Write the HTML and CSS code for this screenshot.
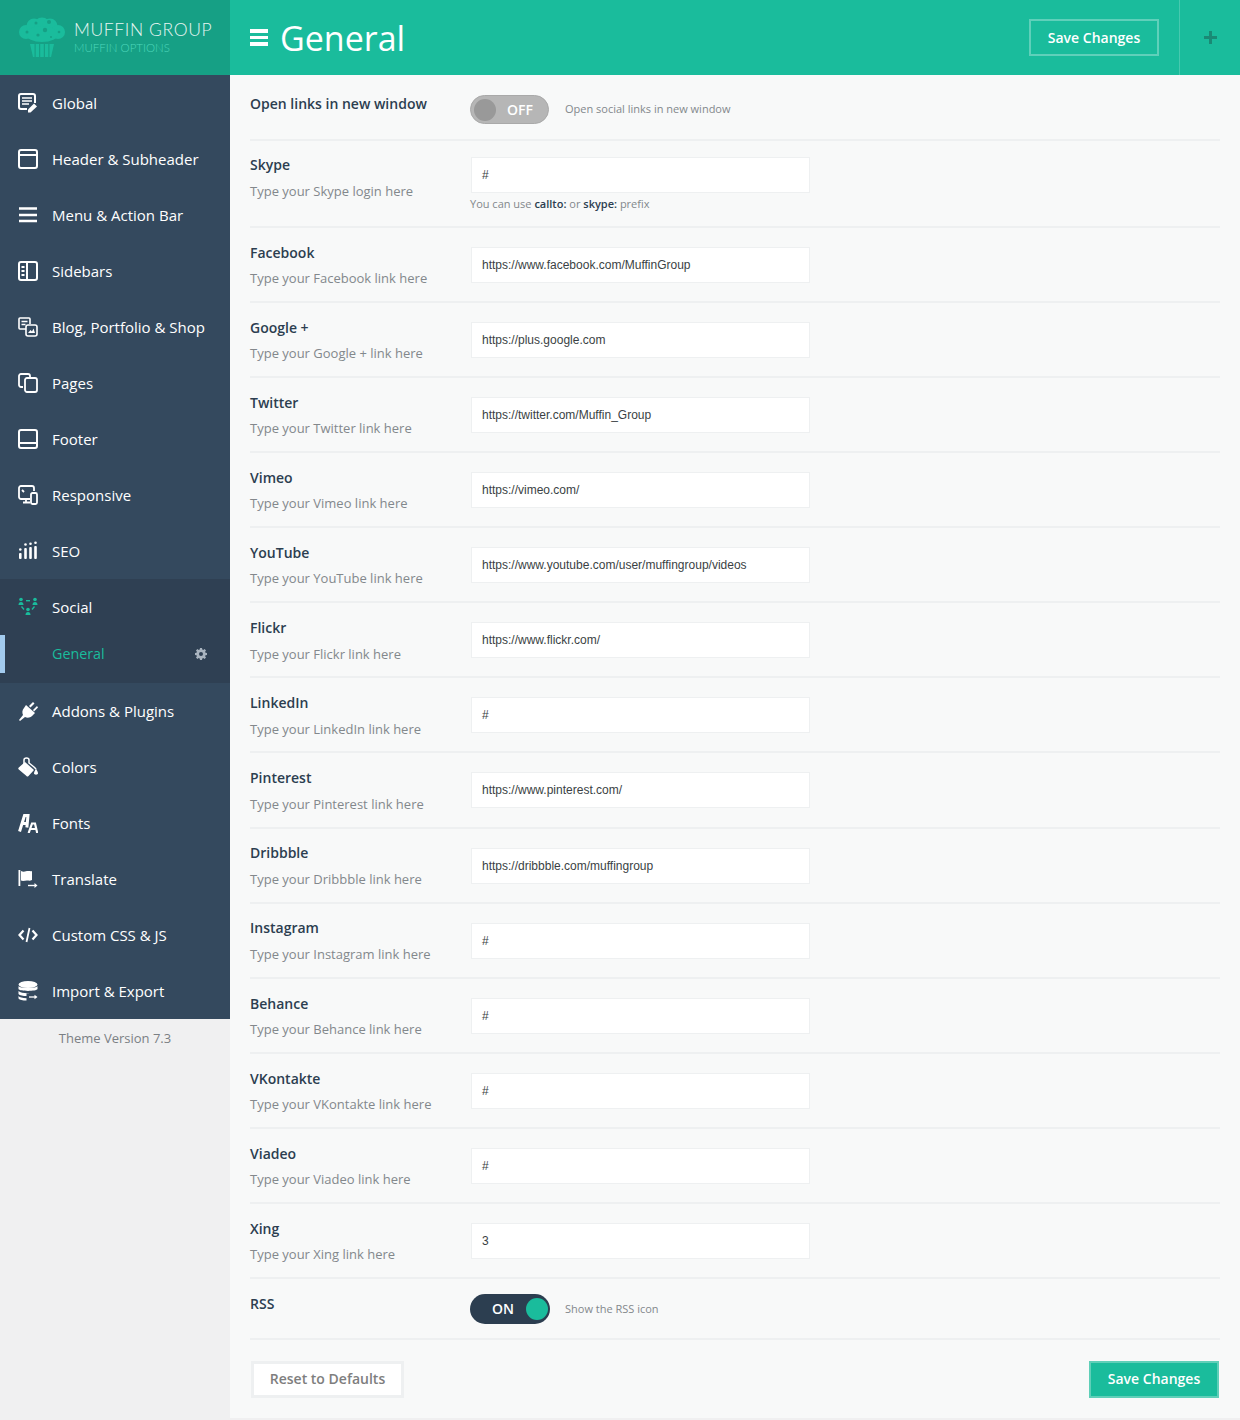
FILE: index.html
```html
<!DOCTYPE html>
<html lang="en">
<head>
  <meta charset="UTF-8">
  <title>Muffin Options</title>
  <link rel="stylesheet" href="styles.css">
</head>
<body>
  <div class="mfn-wrap">
    <div class="mfn-side">
      <div class="mfn-logo">
        <svg class="mfn-muffin" width="48" height="42" viewBox="0 0 48 42">
          <g fill="#1abc9c">
            <circle cx="8" cy="15" r="7"/><circle cx="16" cy="9" r="7.500"/><circle cx="24" cy="8.500" r="8"/><circle cx="32" cy="9" r="7.500"/><circle cx="40" cy="15" r="7"/>
            <ellipse cx="24" cy="17" rx="16" ry="8"/>
            <path d="M12 27h24l-3 13H15z"/>
          </g>
          <g fill="#16a085">
            <circle cx="9" cy="15" r="1.500"/><circle cx="18" cy="6" r="1.500"/><circle cx="31" cy="5" r="2"/>
            <circle cx="27" cy="13" r="2.200"/><circle cx="20" cy="18" r="1.600"/><circle cx="33" cy="20" r="1"/><circle cx="41" cy="15" r="1.300"/>
            <rect x="16.500" y="27" width="1.200" height="13"/><rect x="21" y="27" width="1.200" height="13"/><rect x="25.800" y="27" width="1.200" height="13"/><rect x="30.300" y="27" width="1.200" height="13"/>
          </g>
        </svg>
        <div class="mfn-logo-text">
          <div class="mfn-logo-name">MUFFIN GROUP</div>
          <div class="mfn-logo-sub">MUFFIN OPTIONS</div>
        </div>
      </div>
      <ul class="mfn-menu">
        <li class="mfn-item">
          <svg class="mfn-ico" viewBox="0 0 20 20" fill="none" stroke="#fff" stroke-width="2"><path d="M9 16H3a2 2 0 0 1-2-2V3a2 2 0 0 1 2-2h12a2 2 0 0 1 2 2v7"/><path stroke-width="1.600" d="M4 5h10M4 8h10M4 11h7"/><path fill="#fff" stroke="none" d="M16 10.500l3 3-6.500 6H10v-3z"/></svg>
          Global
        </li>
        <li class="mfn-item">
          <svg class="mfn-ico" viewBox="0 0 20 20" fill="none" stroke="#fff" stroke-width="2"><rect x="1" y="1" width="18" height="18" rx="2"/><path d="M1 6h18"/></svg>
          Header &amp; Subheader
        </li>
        <li class="mfn-item">
          <svg class="mfn-ico" viewBox="0 0 20 20" fill="none" stroke="#fff" stroke-width="2.400"><path d="M1 3.500h18M1 10h18M1 16h18"/></svg>
          Menu &amp; Action Bar
        </li>
        <li class="mfn-item">
          <svg class="mfn-ico" viewBox="0 0 20 20" fill="none" stroke="#fff" stroke-width="2"><rect x="1" y="1" width="18" height="18" rx="2"/><path d="M9 1v18M3.500 6h3M3.500 10h3M3.500 14h3"/></svg>
          Sidebars
        </li>
        <li class="mfn-item">
          <svg class="mfn-ico" viewBox="0 0 20 20" fill="none" stroke="#fff" stroke-width="1.600"><path d="M8 12H2a1 1 0 0 1-1-1V2a1 1 0 0 1 1-1h9a1 1 0 0 1 1 1v5"/><path d="M3.500 4.500h6M3.500 7.500h4"/><rect x="8" y="8" width="11" height="11" rx="2"/><path fill="#fff" stroke="none" d="M10 16l2.500-3 1.500 1.500 1.500-3 1.500 4.500z"/></svg>
          Blog, Portfolio &amp; Shop
        </li>
        <li class="mfn-item">
          <svg class="mfn-ico" viewBox="0 0 20 20" fill="none" stroke="#fff" stroke-width="1.800"><path d="M5 14H3a2 2 0 0 1-2-2V3a2 2 0 0 1 2-2h7a2 2 0 0 1 2 2v2"/><rect x="7" y="5" width="12" height="14" rx="2"/></svg>
          Pages
        </li>
        <li class="mfn-item">
          <svg class="mfn-ico" viewBox="0 0 20 20" fill="none" stroke="#fff" stroke-width="2"><rect x="1" y="1" width="18" height="18" rx="2"/><path d="M1 14h18"/></svg>
          Footer
        </li>
        <li class="mfn-item">
          <svg class="mfn-ico" viewBox="0 0 20 20" fill="none" stroke="#fff" stroke-width="1.800"><path d="M12 14H3a2 2 0 0 1-2-2V3a2 2 0 0 1 2-2h11a2 2 0 0 1 2 2v3"/><path d="M5 17.500h7M8 14v3"/><rect x="13" y="8" width="6" height="11" rx="1.500" fill="#34495e"/><path d="M4 5l2 2"/></svg>
          Responsive
        </li>
        <li class="mfn-item">
          <svg class="mfn-ico" viewBox="0 0 20 20" fill="#fff"><rect x="1" y="12" width="2.600" height="6" rx="1"/><circle cx="2.300" cy="8.500" r="1.300"/><rect x="6.200" y="7" width="2.600" height="11" rx="1"/><circle cx="7.500" cy="3.500" r="1.300"/><rect x="11.200" y="6" width="2.600" height="12" rx="1"/><circle cx="12.500" cy="2.800" r="1.300"/><rect x="16.200" y="5" width="2.600" height="13" rx="1"/><circle cx="17.500" cy="1.800" r="1.300"/></svg>
          SEO
        </li>
        <li class="mfn-group">
          <div class="mfn-item mfn-item-open">
            <svg class="mfn-ico" viewBox="0 0 20 20" fill="#1abc9c"><circle cx="3" cy="2.500" r="1.800"/><path d="M0.500 8c0-2 1-3 2.500-3s2.500 1 2.500 3z"/><circle cx="17" cy="2.500" r="1.800"/><path d="M14.500 8c0-2 1-3 2.500-3s2.500 1 2.500 3z"/><circle cx="10" cy="12.500" r="1.800"/><path d="M7.500 18c0-2 1-3 2.500-3s2.500 1 2.500 3z"/><rect x="8" y="3" width="4" height="1.400"/><path d="M3 10l1-1 2.500 3-1 1zM17 10l-1-1-2.500 3 1 1z"/></svg>
            Social
          </div>
          <div class="mfn-subitem">
            General
            <svg class="mfn-gear" viewBox="0 0 12 12" fill="#a9b4bf"><path fill-rule="evenodd" d="M5 0h2l.3 1.500 1 .4L9.600 1 11 2.400l-.9 1.300.4 1L12 5v2l-1.500.3-.4 1 .9 1.300L9.600 11l-1.300-.9-1 .4L7 12H5l-.3-1.500-1-.4-1.300.9L1 9.600l.9-1.300-.4-1L0 7V5l1.500-.3.4-1L1 2.400 2.400 1l1.300.9 1-.4zM6 4a2 2 0 1 0 0 4 2 2 0 0 0 0-4z"/></svg>
          </div>
        </li>
        <li class="mfn-item">
          <svg class="mfn-ico" viewBox="0 0 20 20" fill="#fff"><path d="M8 4l9 8-3 3c-2 2-5 2-7 1l-5 4-1-1 4-5c-1-2-1-5 1-7zM11 5l4-4 1.500 1.500-4 4zM15 9l4-4 1 1.500-4 4z"/></svg>
          Addons &amp; Plugins
        </li>
        <li class="mfn-item">
          <svg class="mfn-ico" viewBox="0 0 20 20" fill="#fff"><path d="M7 5l9 8-5.500 6c-.7.700-1.500.700-2 0L.8 12.500c-.7-.7-.7-1.500 0-2z"/><path fill="none" stroke="#fff" stroke-width="1.500" d="M6 8V3c0-2.800 5-2.800 5 0v3l5 4 2 2"/><path d="M18 11.500c1 2 2 3.500 2 5s-4 1.500-4 0 1-3 2-5z"/></svg>
          Colors
        </li>
        <li class="mfn-item">
          <svg class="mfn-ico" viewBox="0 0 20 20" fill="none" stroke="#fff" stroke-linecap="square"><path stroke-width="3" d="M2 17L6.500 2.500H10L9 13M4.500 10.500H9"/><path stroke-width="2.200" d="M11 19l3-8.500 3 0 2 8.500M12.500 16h5"/></svg>
          Fonts
        </li>
        <li class="mfn-item">
          <svg class="mfn-ico" viewBox="0 0 20 20" fill="#fff"><rect x="0.500" y="1" width="1.800" height="16"/><path d="M3 2c3 1.500 5 0 7 0s3 .5 4 0v9c-2 1-3 .5-5 .5s-4 1-6 0z"/><path fill="none" stroke="#fff" stroke-width="1.400" d="M10 16.500h8"/><path d="M16.500 14l3 2.500-3 2.500z"/></svg>
          Translate
        </li>
        <li class="mfn-item">
          <svg class="mfn-ico" viewBox="0 0 20 20" fill="none" stroke="#fff" stroke-width="2.200"><path d="M5.500 5.500L1.500 10l4 4.500M14.500 5.500l4 4.500-4 4.500"/><path stroke-width="1.800" d="M11.500 3L8.500 17"/></svg>
          Custom CSS &amp; JS
        </li>
        <li class="mfn-item">
          <svg class="mfn-ico" viewBox="0 0 20 20" fill="#fff"><ellipse cx="10" cy="3.500" rx="9.500" ry="3.500"/><path d="M.5 5c1 2.500 18 2.500 19 0v3c-1 2.500-18 2.500-19 0z"/><path d="M.5 10c2 2 8 2.500 11 2h-3v3c-3 0-7-.5-8-2zM.5 15c1 1.500 4 2 8 2.200v2.300c-4 0-7-.5-8-2z"/><path fill="none" stroke="#fff" stroke-width="1.300" d="M11 16h7"/><path d="M16.500 13.800l3 2.200-3 2.200z"/></svg>
          Import &amp; Export
        </li>
      </ul>
      <div class="mfn-version">Theme Version 7.3</div>
    </div>

    <div class="mfn-main">
      <div class="mfn-top">
        <div class="mfn-burger"><span></span><span></span><span></span></div>
        <h1 class="mfn-title">General</h1>
        <a class="mfn-btn mfn-btn-top">Save Changes</a>
        <div class="mfn-expand"><span class="mfn-plus"></span></div>
      </div>

      <div class="mfn-form">
        <div class="mfn-row mfn-row-toggle">
          <div class="mfn-label"><h3>Open links in new window</h3></div>
          <div class="mfn-field mfn-field-toggle">
            <div class="mfn-switch mfn-switch-off"><i></i><b>OFF</b></div>
            <span class="mfn-desc">Open social links in new window</span>
          </div>
        </div>
        <div class="mfn-row mfn-row-skype">
          <div class="mfn-label"><h3>Skype</h3><p>Type your Skype login here</p></div>
          <div class="mfn-field">
            <div class="mfn-input">#</div>
            <div class="mfn-note">You can use <b>callto:</b> or <b>skype:</b> prefix</div>
          </div>
        </div>
        <div class="mfn-row">
          <div class="mfn-label"><h3>Facebook</h3><p>Type your Facebook link here</p></div>
          <div class="mfn-field"><div class="mfn-input">https://www.facebook.com/MuffinGroup</div></div>
        </div>
        <div class="mfn-row">
          <div class="mfn-label"><h3>Google +</h3><p>Type your Google + link here</p></div>
          <div class="mfn-field"><div class="mfn-input">https://plus.google.com</div></div>
        </div>
        <div class="mfn-row">
          <div class="mfn-label"><h3>Twitter</h3><p>Type your Twitter link here</p></div>
          <div class="mfn-field"><div class="mfn-input">https://twitter.com/Muffin_Group</div></div>
        </div>
        <div class="mfn-row">
          <div class="mfn-label"><h3>Vimeo</h3><p>Type your Vimeo link here</p></div>
          <div class="mfn-field"><div class="mfn-input">https://vimeo.com/</div></div>
        </div>
        <div class="mfn-row">
          <div class="mfn-label"><h3>YouTube</h3><p>Type your YouTube link here</p></div>
          <div class="mfn-field"><div class="mfn-input">https://www.youtube.com/user/muffingroup/videos</div></div>
        </div>
        <div class="mfn-row">
          <div class="mfn-label"><h3>Flickr</h3><p>Type your Flickr link here</p></div>
          <div class="mfn-field"><div class="mfn-input">https://www.flickr.com/</div></div>
        </div>
        <div class="mfn-row">
          <div class="mfn-label"><h3>LinkedIn</h3><p>Type your LinkedIn link here</p></div>
          <div class="mfn-field"><div class="mfn-input">#</div></div>
        </div>
        <div class="mfn-row">
          <div class="mfn-label"><h3>Pinterest</h3><p>Type your Pinterest link here</p></div>
          <div class="mfn-field"><div class="mfn-input">https://www.pinterest.com/</div></div>
        </div>
        <div class="mfn-row">
          <div class="mfn-label"><h3>Dribbble</h3><p>Type your Dribbble link here</p></div>
          <div class="mfn-field"><div class="mfn-input">https://dribbble.com/muffingroup</div></div>
        </div>
        <div class="mfn-row">
          <div class="mfn-label"><h3>Instagram</h3><p>Type your Instagram link here</p></div>
          <div class="mfn-field"><div class="mfn-input">#</div></div>
        </div>
        <div class="mfn-row">
          <div class="mfn-label"><h3>Behance</h3><p>Type your Behance link here</p></div>
          <div class="mfn-field"><div class="mfn-input">#</div></div>
        </div>
        <div class="mfn-row">
          <div class="mfn-label"><h3>VKontakte</h3><p>Type your VKontakte link here</p></div>
          <div class="mfn-field"><div class="mfn-input">#</div></div>
        </div>
        <div class="mfn-row">
          <div class="mfn-label"><h3>Viadeo</h3><p>Type your Viadeo link here</p></div>
          <div class="mfn-field"><div class="mfn-input">#</div></div>
        </div>
        <div class="mfn-row">
          <div class="mfn-label"><h3>Xing</h3><p>Type your Xing link here</p></div>
          <div class="mfn-field"><div class="mfn-input">3</div></div>
        </div>
        <div class="mfn-row mfn-row-toggle mfn-row-rss">
          <div class="mfn-label"><h3>RSS</h3></div>
          <div class="mfn-field mfn-field-toggle">
            <div class="mfn-switch mfn-switch-on"><b>ON</b><i></i></div>
            <span class="mfn-desc">Show the RSS icon</span>
          </div>
        </div>
        <div class="mfn-foot">
          <a class="mfn-btn mfn-btn-reset">Reset to Defaults</a>
          <a class="mfn-btn mfn-btn-save">Save Changes</a>
        </div>
      </div>
    </div>
  </div>
</body>
</html>
```

FILE: styles.css
```css
* {
  box-sizing: border-box;
}
body {
  margin: 0;
  background: #f0f0f1;
  font-family: "Open Sans", sans-serif;
  color: #2c3e50;
}
.mfn-wrap {
  display: flex;
  align-items: flex-start;
  width: 1240px;
}

/* sidebar */
.mfn-side {
  width: 230px;
  flex: none;
}
.mfn-logo {
  height: 75px;
  background: #16a085;
  display: flex;
  align-items: center;
  padding: 0 0 0 18px;
  gap: 8px;
}
.mfn-muffin {
  flex: none;
}
.mfn-logo-text {
  font-family: "Lato", sans-serif;
  font-weight: 300;
  padding-top: 1px;
}
.mfn-logo-name {
  font-size: 17.500px;
  line-height: 18px;
  letter-spacing: 0.6px;
  color: #e8f6f3;
  white-space: nowrap;
}
.mfn-logo-sub {
  font-size: 11.500px;
  line-height: 17px;
  letter-spacing: 0;
  color: #4dd6ba;
  white-space: nowrap;
}
.mfn-menu {
  list-style: none;
  margin: 0;
  padding: 0;
  background: #34495e;
}
.mfn-item {
  height: 56px;
  display: flex;
  align-items: center;
  gap: 14px;
  padding-left: 18px;
  font-size: 15px;
  color: #fff;
}
.mfn-ico {
  width: 20px;
  height: 20px;
  flex: none;
}
.mfn-group {
  background: #2f4053;
  height: 104px;
}
.mfn-item-open {
  color: #fff;
}
.mfn-subitem {
  height: 38px;
  display: flex;
  align-items: center;
  justify-content: space-between;
  padding: 0 23px 1px 47px;
  border-left: 5px solid #a3cbee;
  font-size: 14.300px;
  color: #1abc9c;
}
.mfn-gear {
  width: 12px;
  height: 12px;
}
.mfn-version {
  text-align: center;
  font-size: 13px;
  line-height: 20px;
  padding-top: 9px;
  color: #7b7f84;
}

/* top bar */
.mfn-main {
  flex: 1;
  background: #f8f9f9;
  height: 1418px;
}
.mfn-top {
  height: 75px;
  background: #1abc9c;
  display: flex;
  align-items: center;
  padding-left: 20px;
}
.mfn-burger {
  width: 18px;
  display: flex;
  flex-direction: column;
  gap: 3px;
}
.mfn-burger span {
  height: 3.500px;
  background: #fff;
}
.mfn-title {
  margin: 0 auto 0 12px;
  font-size: 34px;
  font-weight: 400;
  line-height: 48px;
  color: #fff;
}
.mfn-btn {
  display: flex;
  align-items: center;
  justify-content: center;
  height: 37px;
  font-size: 14px;
  font-weight: 600;
}
.mfn-btn-top {
  width: 130px;
  border: 2px solid rgba(255, 255, 255, 0.3);
  color: #fff;
}
.mfn-expand {
  width: 61px;
  height: 75px;
  margin-left: 20px;
  border-left: 1px solid rgba(255, 255, 255, 0.2);
  display: flex;
  align-items: center;
  justify-content: center;
}
.mfn-plus {
  width: 13px;
  height: 13px;
  background:
    linear-gradient(#1a8a75, #1a8a75) center / 13px 3px no-repeat,
    linear-gradient(#1a8a75, #1a8a75) center / 3px 13px no-repeat;
}

/* form rows */
.mfn-form {
  padding: 0 20px;
}
.mfn-row {
  display: flex;
  height: 75.070px;
  padding-top: 14.925px;
  border-bottom: 2px solid #eef0f1;
}
.mfn-row-toggle {
  height: 66px;
  padding-top: 19px;
}
.mfn-row-skype {
  height: 87px;
  padding-top: 14px;
}
.mfn-row-skype .mfn-field {
  padding-top: 2px;
}
.mfn-row-rss {
  height: 61px;
  padding-top: 15px;
}
.mfn-row-rss .mfn-field-toggle {
  padding-top: 0;
  gap: 15px;
}
.mfn-row-rss .mfn-desc {
  line-height: 30px;
}
.mfn-label {
  width: 220px;
  flex: none;
}
.mfn-label h3 {
  margin: 0;
  font-size: 14px;
  font-weight: 600;
  line-height: 20px;
  color: #2c3e50;
}
.mfn-label p {
  margin: 5.320px 0 0;
  font-size: 13px;
  line-height: 20px;
  color: #83888c;
}
.mfn-row-skype .mfn-label p {
  margin-top: 6px;
}
.mfn-field {
  padding-top: 4.100px;
  flex: 1;
}
.mfn-field-toggle {
  display: flex;
  align-items: flex-start;
  gap: 16px;
  padding-top: 1px;
}
.mfn-input {
  width: 339px;
  height: 36px;
  margin-left: 1px;
  padding: 0 10px;
  background: #fff;
  border: 1px solid #eef0f1;
  font-family: "Liberation Sans", Arial, sans-serif;
  font-size: 12px;
  line-height: 34px;
  color: #3a3f44;
}
.mfn-note {
  margin-top: 4px;
  font-size: 11px;
  line-height: 14px;
  color: #83888c;
}
.mfn-note b {
  font-weight: 600;
  color: #2c3e50;
}
.mfn-desc {
  font-size: 11px;
  line-height: 28px;
  color: #83888c;
}
.mfn-switch {
  width: 79px;
  height: 29px;
  border-radius: 15px;
  display: flex;
  align-items: center;
  flex: none;
  color: #fff;
}
.mfn-switch i {
  width: 22px;
  height: 22px;
  border-radius: 50%;
}
.mfn-switch b {
  font-size: 14px;
  font-weight: 600;
}
.mfn-switch-off {
  background: #b6b6b6;
  border: 1px solid #a9a9a9;
  padding-left: 3px;
}
.mfn-switch-off i {
  background: #999;
  margin-right: 11px;
}
.mfn-switch-on {
  width: 80px;
  height: 30px;
  background: #2c3e50;
  padding-left: 22px;
}
.mfn-switch-on i {
  background: #1abc9c;
  margin-left: 12px;
}
.mfn-foot {
  display: flex;
  justify-content: space-between;
  padding: 21px 1px 0;
}
.mfn-foot .mfn-btn {
  padding-bottom: 2px;
}
.mfn-btn-reset {
  width: 153px;
  background: #fff;
  border: 3px solid #eef0f1;
  color: #7e7e7e;
}
.mfn-btn-save {
  width: 130px;
  background: #1abc9c;
  border: 2px solid #5fcfb8;
  color: #fff;
}
```
